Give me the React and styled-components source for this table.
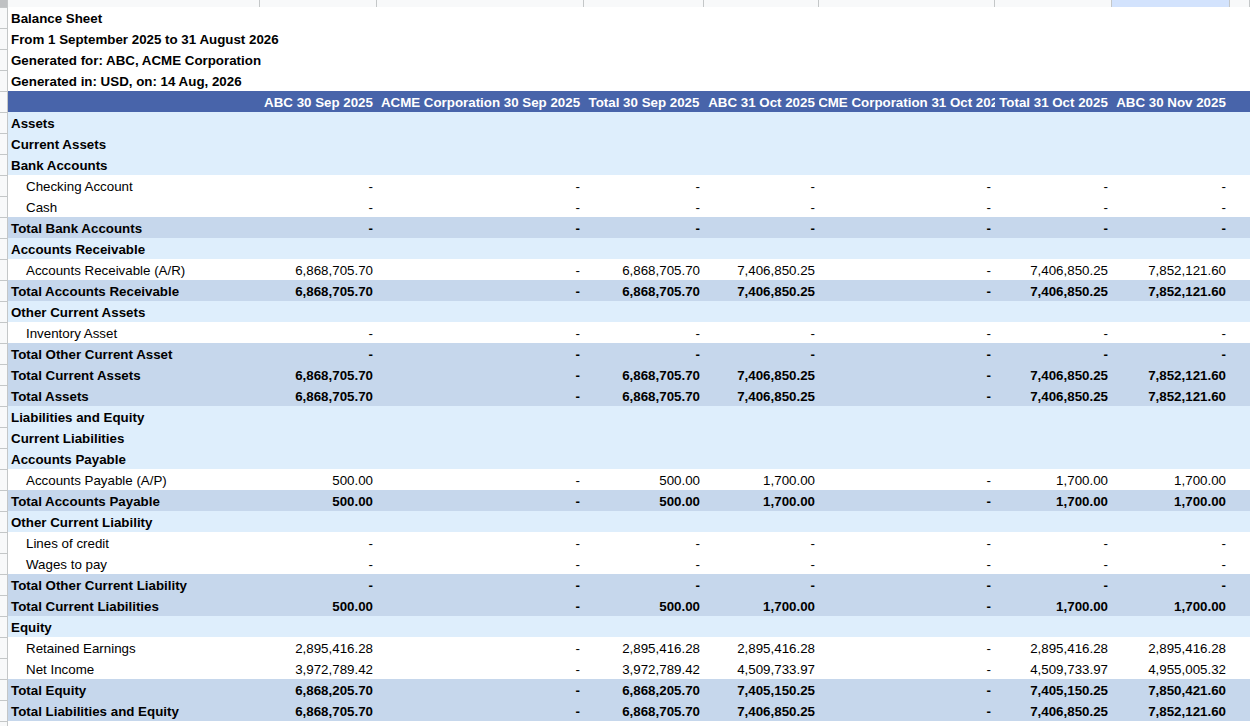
import React from "react";
import styled, { createGlobalStyle } from "styled-components";

const GlobalStyle = createGlobalStyle`
  html, body { margin: 0; padding: 0; background: #fff; }
  body { font-family: "Liberation Sans", Arial, sans-serif; font-size: 13.33px; color: #000; }
`;

const COLS = "8px 252px 117px 207px 120px 115px 176px 117px 118px 1fr";
const LINE = "#c4c7c8";

const BG = {
  title: "#ffffff",
  header: "#4864aa",
  section: "#deeefc",
  item: "#ffffff",
  total: "#c6d7ec",
};

const Sheet = styled.div`
  width: 1250px;
  height: 726px;
  overflow: hidden;
  background: #fff;
`;

const TopStrip = styled.div`
  display: grid;
  grid-template-columns: ${COLS};
  height: 8px;
`;

const Corner = styled.div`
  background: #bfc1c3;
  border-bottom: 1px solid ${LINE};
  border-right: 1px solid ${LINE};
  box-sizing: border-box;
`;

const ColHead = styled.div`
  box-sizing: border-box;
  background: ${(p) => (p.$selected ? "#d3e3fd" : "#f8f9fa")};
  border-bottom: 1px solid ${LINE};
  border-right: 1px solid ${LINE};
`;

const Row = styled.div`
  display: grid;
  grid-template-columns: ${COLS};
  height: 21px;
`;

const RowHead = styled.div`
  box-sizing: border-box;
  background: #f8f9fa;
  border-right: 1px solid ${LINE};
  border-bottom: 1px solid ${LINE};
`;

const Body = styled.div`
  grid-column: 2 / -1;
  display: grid;
  grid-template-columns: 252px 117px 207px 120px 115px 176px 117px 118px 1fr;
  margin-top: -1px;
  height: 21px;
  overflow: hidden;
  background: ${(p) => BG[p.$kind]};
  color: ${(p) => (p.$kind === "header" ? "#fff" : "#000")};
  font-weight: ${(p) => (p.$kind === "item" ? 400 : 700)};
  line-height: 23px;
  white-space: nowrap;
`;

const TitleText = styled.div`
  grid-column: 1 / -1;
  padding-left: 3px;
`;

const Label = styled.div`
  padding-left: ${(p) => (p.$indent ? 18 : 3)}px;
  overflow: visible;
`;

const HeadCell = styled.div`
  overflow: hidden;
  display: flex;
  justify-content: center;
`;

const Num = styled.div`
  text-align: right;
  padding-right: 4px;
`;

const headers = [
  "ABC 30 Sep 2025",
  "ACME Corporation 30 Sep 2025",
  "Total 30 Sep 2025",
  "ABC 31 Oct 2025",
  "ACME Corporation 31 Oct 2025",
  "Total 31 Oct 2025",
  "ABC 30 Nov 2025",
];

const D = ["-", "-", "-", "-", "-", "-", "-"];
const AR = ["6,868,705.70", "-", "6,868,705.70", "7,406,850.25", "-", "7,406,850.25", "7,852,121.60"];
const AP = ["500.00", "-", "500.00", "1,700.00", "-", "1,700.00", "1,700.00"];
const RE = ["2,895,416.28", "-", "2,895,416.28", "2,895,416.28", "-", "2,895,416.28", "2,895,416.28"];
const NI = ["3,972,789.42", "-", "3,972,789.42", "4,509,733.97", "-", "4,509,733.97", "4,955,005.32"];
const TE = ["6,868,205.70", "-", "6,868,205.70", "7,405,150.25", "-", "7,405,150.25", "7,850,421.60"];

const rows = [
  { kind: "title", label: "Balance Sheet" },
  { kind: "title", label: "From 1 September 2025 to 31 August 2026" },
  { kind: "title", label: "Generated for: ABC, ACME Corporation" },
  { kind: "title", label: "Generated in: USD, on: 14 Aug, 2026" },
  { kind: "header" },
  { kind: "section", label: "Assets" },
  { kind: "section", label: "Current Assets" },
  { kind: "section", label: "Bank Accounts" },
  { kind: "item", label: "Checking Account", values: D },
  { kind: "item", label: "Cash", values: D },
  { kind: "total", label: "Total Bank Accounts", values: D },
  { kind: "section", label: "Accounts Receivable" },
  { kind: "item", label: "Accounts Receivable (A/R)", values: AR },
  { kind: "total", label: "Total Accounts Receivable", values: AR },
  { kind: "section", label: "Other Current Assets" },
  { kind: "item", label: "Inventory Asset", values: D },
  { kind: "total", label: "Total Other Current Asset", values: D },
  { kind: "total", label: "Total Current Assets", values: AR },
  { kind: "total", label: "Total Assets", values: AR },
  { kind: "section", label: "Liabilities and Equity" },
  { kind: "section", label: "Current Liabilities" },
  { kind: "section", label: "Accounts Payable" },
  { kind: "item", label: "Accounts Payable (A/P)", values: AP },
  { kind: "total", label: "Total Accounts Payable", values: AP },
  { kind: "section", label: "Other Current Liability" },
  { kind: "item", label: "Lines of credit", values: D },
  { kind: "item", label: "Wages to pay", values: D },
  { kind: "total", label: "Total Other Current Liability", values: D },
  { kind: "total", label: "Total Current Liabilities", values: AP },
  { kind: "section", label: "Equity" },
  { kind: "item", label: "Retained Earnings", values: RE },
  { kind: "item", label: "Net Income", values: NI },
  { kind: "total", label: "Total Equity", values: TE },
  { kind: "total", label: "Total Liabilities and Equity", values: AR },
];

function RowBody({ row }) {
  if (row.kind === "title") {
    return <TitleText>{row.label}</TitleText>;
  }
  if (row.kind === "header") {
    return (
      <>
        <div />
        {headers.map((h) => (
          <HeadCell key={h}>
            <span>{h}</span>
          </HeadCell>
        ))}
        <div />
      </>
    );
  }
  return (
    <>
      <Label $indent={row.kind === "item"}>{row.label}</Label>
      {(row.values || []).map((v, i) => (
        <Num key={i}>{v}</Num>
      ))}
    </>
  );
}

export default function App() {
  return (
    <>
      <GlobalStyle />
      <Sheet>
        <TopStrip>
          <Corner />
          {[0, 1, 2, 3, 4, 5, 6, 7, 8].map((i) => (
            <ColHead key={i} $selected={i === 7} />
          ))}
        </TopStrip>
        {rows.map((row, i) => (
          <Row key={i}>
            <RowHead />
            <Body $kind={row.kind}>
              <RowBody row={row} />
            </Body>
          </Row>
        ))}
        <Row>
          <RowHead />
        </Row>
      </Sheet>
    </>
  );
}
